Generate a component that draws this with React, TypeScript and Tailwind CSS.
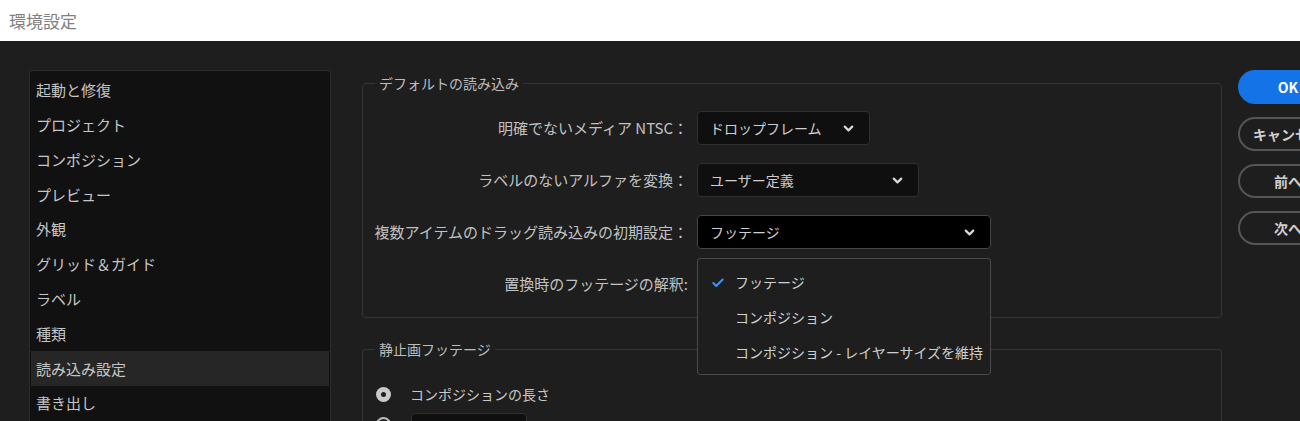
import React from 'react';
import { Check, ChevronDown } from 'lucide-react';

const font = "font-['Noto_Sans_CJK_JP','Noto_Sans',sans-serif]";

const categories = [
  '起動と修復',
  'プロジェクト',
  'コンポジション',
  'プレビュー',
  '外観',
  'グリッド＆ガイド',
  'ラベル',
  '種類',
  '読み込み設定',
  '書き出し',
];

function Select({ value, width, active }: { value: string; width: string; active?: boolean }) {
  return (
    <div
      className={`${width} h-[34px] flex items-center justify-between pl-[12px] pr-[13px] rounded-[4px] border text-[14px] text-[#cfcfcf] ${
        active ? 'bg-black border-[#454545]' : 'bg-[#0f0f0f] border-[#2f2f2f]'
      }`}
    >
      <span>{value}</span>
      <ChevronDown className="w-[15px] h-[15px] text-[#d8d8d8]" strokeWidth={3.5} />
    </div>
  );
}

function Row({ label, children }: { label: string; children?: React.ReactNode }) {
  return (
    <div className="flex items-center h-[34px]">
      <div className="w-[334px] text-right pr-[9px] text-[15px] text-[#c2c2c2] whitespace-nowrap">{label}</div>
      {children}
    </div>
  );
}

export default function App() {
  return (
    <div className={`${font} w-[1300px] h-[421px] flex flex-col overflow-hidden bg-[#1e1e1e]`}>
      <div className="h-[41px] shrink-0 bg-white flex items-center pl-[9px] text-[17px] text-[#808080]">
        環境設定
      </div>

      <div className="flex-1 flex gap-[31px] pl-[29px] pt-[29px] min-h-0">
        {/* category list */}
        <div className="w-[302px] shrink-0 bg-[#111111] border border-b-0 border-[#2b2b2b] rounded-t-[4px] pt-[2px] px-px">
          {categories.map((c) => (
            <div
              key={c}
              className={`h-[34.8px] flex items-center pl-[5px] text-[15px] text-[#c6c6c6] ${
                c === '読み込み設定' ? 'bg-[#262626]' : ''
              }`}
            >
              {c}
            </div>
          ))}
        </div>

        {/* settings */}
        <div className="w-[860px] shrink-0 flex flex-col gap-[21px] mt-[3px]">
          <fieldset className="relative border border-[#363636] rounded-[4px] pb-[16px]">
            <legend className="ml-[12px] px-[4px] text-[14px] leading-[20px] text-[#bdbdbd]">デフォルトの読み込み</legend>
            <div className="flex flex-col gap-[18px] pt-[18px]">
              <Row label="明確でないメディア NTSC：">
                <Select value="ドロップフレーム" width="w-[173px]" />
              </Row>
              <Row label="ラベルのないアルファを変換：">
                <Select value="ユーザー定義" width="w-[222px]" />
              </Row>
              <Row label="複数アイテムのドラッグ読み込みの初期設定：">
                <div className="relative">
                  <Select value="フッテージ" width="w-[294px]" active />
                  <div className="absolute z-10 left-0 top-[43px] w-[294px] bg-[#1e1e1e] border border-[#4a4a4a] rounded-[3px] pt-[6px] pb-[4px] text-[14px] text-[#d0d0d0]">
                    {['フッテージ', 'コンポジション', 'コンポジション - レイヤーサイズを維持'].map((item, i) => (
                      <div key={item} className="h-[35px] flex items-center pl-[13px] whitespace-nowrap">
                        <span className="w-[24px] flex items-center">
                          {i === 0 && <Check className="w-[14px] h-[14px] text-[#3f93f5]" strokeWidth={3.5} />}
                        </span>
                        {item}
                      </div>
                    ))}
                  </div>
                </div>
              </Row>
              <Row label="置換時のフッテージの解釈:">
                <div className="w-[294px] h-[34px]" />
              </Row>
            </div>
          </fieldset>

          <fieldset className="border border-b-0 border-[#363636] rounded-t-[4px] flex-1">
            <legend className="ml-[12px] px-[4px] text-[14px] leading-[20px] text-[#bdbdbd]">静止画フッテージ</legend>
            <div className="flex flex-col gap-[8px] pt-[24px] pl-[13px]">
              <div className="flex items-center h-[22px] gap-[19px]">
                <span className="w-[15px] h-[15px] rounded-full bg-[#c9c9c9] flex items-center justify-center">
                  <span className="w-[5px] h-[5px] rounded-full bg-[#1e1e1e]" />
                </span>
                <span className="text-[14px] text-[#c8c8c8]">コンポジションの長さ</span>
              </div>
              <div className="flex items-start gap-[20px]">
                <span className="w-[15px] h-[15px] rounded-full border-[2px] border-[#bdbdbd] mt-[4px]" />
                <span className="w-[116px] h-[30px] bg-[#0f0f0f] border border-[#2f2f2f] rounded-[4px]" />
              </div>
            </div>
          </fieldset>
        </div>

        {/* buttons */}
        <div className="w-[100px] shrink-0 flex flex-col gap-[13px] -ml-[15px]">
          <button className="h-[34px] rounded-full bg-[#1473e6] text-white text-[14px] font-bold">OK</button>
          {['キャンセル', '前へ', '次へ'].map((b) => (
            <button
              key={b}
              className="h-[34px] rounded-full border-2 border-[#555555] text-[#cfcfcf] text-[14px] font-bold"
            >
              {b}
            </button>
          ))}
        </div>
      </div>
    </div>
  );
}
